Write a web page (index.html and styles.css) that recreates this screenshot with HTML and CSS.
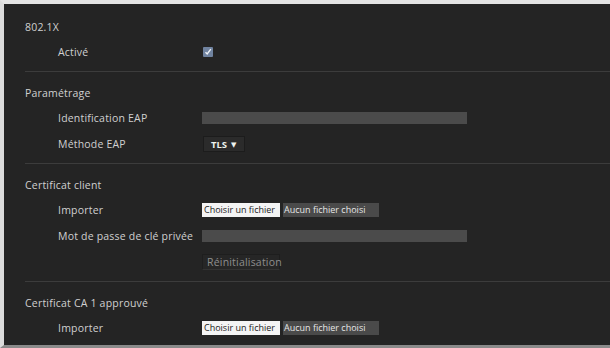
FILE: index.html
```html
<!DOCTYPE html>
<html lang="fr">
<head>
<meta charset="utf-8">
<link rel="stylesheet" href="styles.css">
</head>
<body>
<div class="frame">
  <section class="sec first">
    <div class="title">802.1X</div>
    <div class="row">
      <div class="label">Activé</div>
      <div class="ctrl"><span class="check"><svg width="8" height="8" viewBox="0 0 8 8"><path d="M1.5 4.2 L3.2 6 L6.8 1.2" fill="none" stroke="#eef2f7" stroke-width="1.4"/></svg></span></div>
    </div>
  </section>
  <div class="sep"></div>
  <section class="sec">
    <div class="title">Paramétrage</div>
    <div class="row">
      <div class="label">Identification EAP</div>
      <div class="ctrl"><span class="input"></span></div>
    </div>
    <div class="row">
      <div class="label">Méthode EAP</div>
      <div class="ctrl"><span class="select">TLS <span class="arrow">▼</span></span></div>
    </div>
  </section>
  <div class="sep"></div>
  <section class="sec">
    <div class="title">Certificat client</div>
    <div class="row">
      <div class="label">Importer</div>
      <div class="ctrl"><span class="file"><span class="fbtn">Choisir un fichier</span><span class="fname">Aucun fichier choisi</span></span></div>
    </div>
    <div class="row">
      <div class="label">Mot de passe de clé privée</div>
      <div class="ctrl"><span class="input"></span></div>
    </div>
    <div class="row">
      <div class="label"></div>
      <div class="ctrl"><span class="btn">Réinitialisation</span></div>
    </div>
  </section>
  <div class="sep"></div>
  <section class="sec">
    <div class="title">Certificat CA 1 approuvé</div>
    <div class="row">
      <div class="label">Importer</div>
      <div class="ctrl"><span class="file"><span class="fbtn">Choisir un fichier</span><span class="fname">Aucun fichier choisi</span></span></div>
    </div>
  </section>
</div>
</body>
</html>
```

FILE: styles.css
```css
html, body {
  margin: 0;
  padding: 0;
  background: #242424;
  overflow: hidden;
}
body {
  font-family: "Open Sans", "DejaVu Sans", sans-serif;
  font-size: 10.5px;
  letter-spacing: 0.2px;
  color: #d0d0d0;
}
.frame {
  box-sizing: border-box;
  height: 348px;
  overflow: hidden;
  border-top: 4px solid #e4e4e4;
  border-left: 4px solid #dcdcdc;
  border-bottom: 3px solid #8a8a8a;
  background: #242424;
}
.sec {
  padding: 11px 0 6px 21px;
}
.sec.first {
  padding-top: 13px;
}
.title {
  height: 20px;
  line-height: 20px;
  margin-bottom: 2px;
}
.row {
  display: flex;
  align-items: center;
  height: 26px;
}
.label {
  width: 144px;
  padding-left: 33px;
  flex: none;
  white-space: nowrap;
}
.ctrl {
  display: flex;
  align-items: center;
}
.sep {
  height: 1px;
  margin-left: 21px;
  background: #3c3c3c;
}
.check {
  display: inline-flex;
  align-items: center;
  justify-content: center;
  width: 10px;
  height: 10px;
  margin-left: 1px;
  background: #7083a0;
  border-radius: 1px;
}
.input {
  display: block;
  width: 265px;
  height: 12px;
  background: #4b4b4b;
}
.select {
  display: inline-flex;
  align-items: center;
  box-sizing: border-box;
  height: 16px;
  width: 42px;
  padding-left: 7px;
  margin-left: 1px;
  background: #2b2b2b;
  border: 1px solid #1c1c1c;
  color: #eef3ee;
  font-weight: bold;
  font-size: 9.5px;
  letter-spacing: 0;
}
.arrow {
  font-size: 7px;
  margin-left: 4px;
}
.file {
  display: inline-flex;
  align-items: center;
  height: 14px;
  font-size: 9px;
  letter-spacing: 0;
}
.fbtn {
  box-sizing: border-box;
  height: 14px;
  line-height: 14px;
  padding: 0 2px;
  width: 78px;
  background: #f4f4f4;
  color: #222;
  white-space: nowrap;
  overflow: hidden;
}
.fname {
  box-sizing: border-box;
  height: 14px;
  line-height: 14px;
  width: 96px;
  margin-left: 3px;
  padding-left: 1px;
  background: #4a4a4a;
  color: #e6e6e6;
  white-space: nowrap;
  overflow: hidden;
}
.btn {
  display: inline-block;
  box-sizing: border-box;
  height: 16px;
  line-height: 14px;
  width: 78px;
  padding-left: 4px;
  background: #262626;
  border: 1px solid #1e1e1e;
  border-bottom-color: #333;
  color: #8e8e8e;
  white-space: nowrap;
}
```
